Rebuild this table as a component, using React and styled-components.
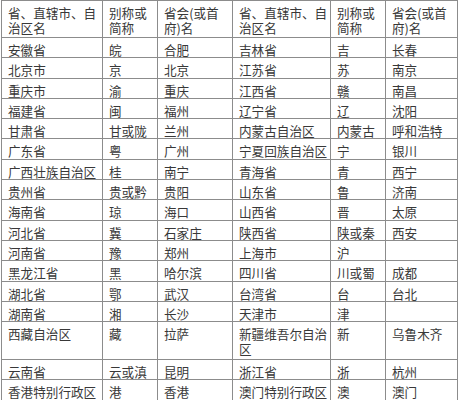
import React from 'react';
import styled, { createGlobalStyle } from 'styled-components';

const GlobalStyle = createGlobalStyle`
  html, body {
    margin: 0;
    padding: 0;
    background: #fff;
  }
`;

const Page = styled.div`
  width: 460px;
  height: 400px;
  overflow: hidden;
  padding-left: 1px;
  box-sizing: border-box;
`;

const Table = styled.table`
  border-collapse: collapse;
  table-layout: fixed;
  width: 456px;
  font-family: "Noto Sans CJK SC", "Noto Sans", sans-serif;
  font-size: 12.6px;
  color: #383838;
`;

const Row = styled.tr`
  height: ${(props) => props.h}px;
`;

const Cell = styled.td`
  border: 1px solid #8c8c8c;
  padding: 4px 0 0 6px;
  line-height: 15px;
  vertical-align: top;
  font-weight: 400;
  text-align: left;
  overflow: hidden;
`;

const HeadCell = styled(Cell).attrs({ as: 'th' })`
  padding-top: 4px;
  line-height: 15px;
`;

const widths = [101, 55, 75, 98, 55, 72];

const header = ['省、直辖市、自治区名', '别称或简称', '省会(或首府)名'];

const rows = [
  ['安徽省', '皖', '合肥', '吉林省', '吉', '长春'],
  ['北京市', '京', '北京', '江苏省', '苏', '南京'],
  ['重庆市', '渝', '重庆', '江西省', '赣', '南昌'],
  ['福建省', '闽', '福州', '辽宁省', '辽', '沈阳'],
  ['甘肃省', '甘或陇', '兰州', '内蒙古自治区', '内蒙古', '呼和浩特'],
  ['广东省', '粤', '广州', '宁夏回族自治区', '宁', '银川'],
  ['广西壮族自治区', '桂', '南宁', '青海省', '青', '西宁'],
  ['贵州省', '贵或黔', '贵阳', '山东省', '鲁', '济南'],
  ['海南省', '琼', '海口', '山西省', '晋', '太原'],
  ['河北省', '冀', '石家庄', '陕西省', '陕或秦', '西安'],
  ['河南省', '豫', '郑州', '上海市', '沪', ''],
  ['黑龙江省', '黑', '哈尔滨', '四川省', '川或蜀', '成都'],
  ['湖北省', '鄂', '武汉', '台湾省', '台', '台北'],
  ['湖南省', '湘', '长沙', '天津市', '津', ''],
  ['西藏自治区', '藏', '拉萨', '新疆维吾尔自治区', '新', '乌鲁木齐'],
  ['云南省', '云或滇', '昆明', '浙江省', '浙', '杭州'],
  ['香港特别行政区', '港', '香港', '澳门特别行政区', '澳', '澳门'],
];

export default function App() {
  return (
    <Page>
      <GlobalStyle />
      <Table>
        <colgroup>
          {widths.map((w, i) => (
            <col key={i} style={{ width: w }} />
          ))}
        </colgroup>
        <thead>
          <Row h={37}>
            {[...header, ...header].map((t, i) => (
              <HeadCell key={i}>{t}</HeadCell>
            ))}
          </Row>
        </thead>
        <tbody>
          {rows.map((r, i) => (
            <Row key={i} h={r[3].length > 7 ? 38 : 20.3}>
              {r.map((t, j) => (
                <Cell key={j}>{t}</Cell>
              ))}
            </Row>
          ))}
        </tbody>
      </Table>
    </Page>
  );
}
